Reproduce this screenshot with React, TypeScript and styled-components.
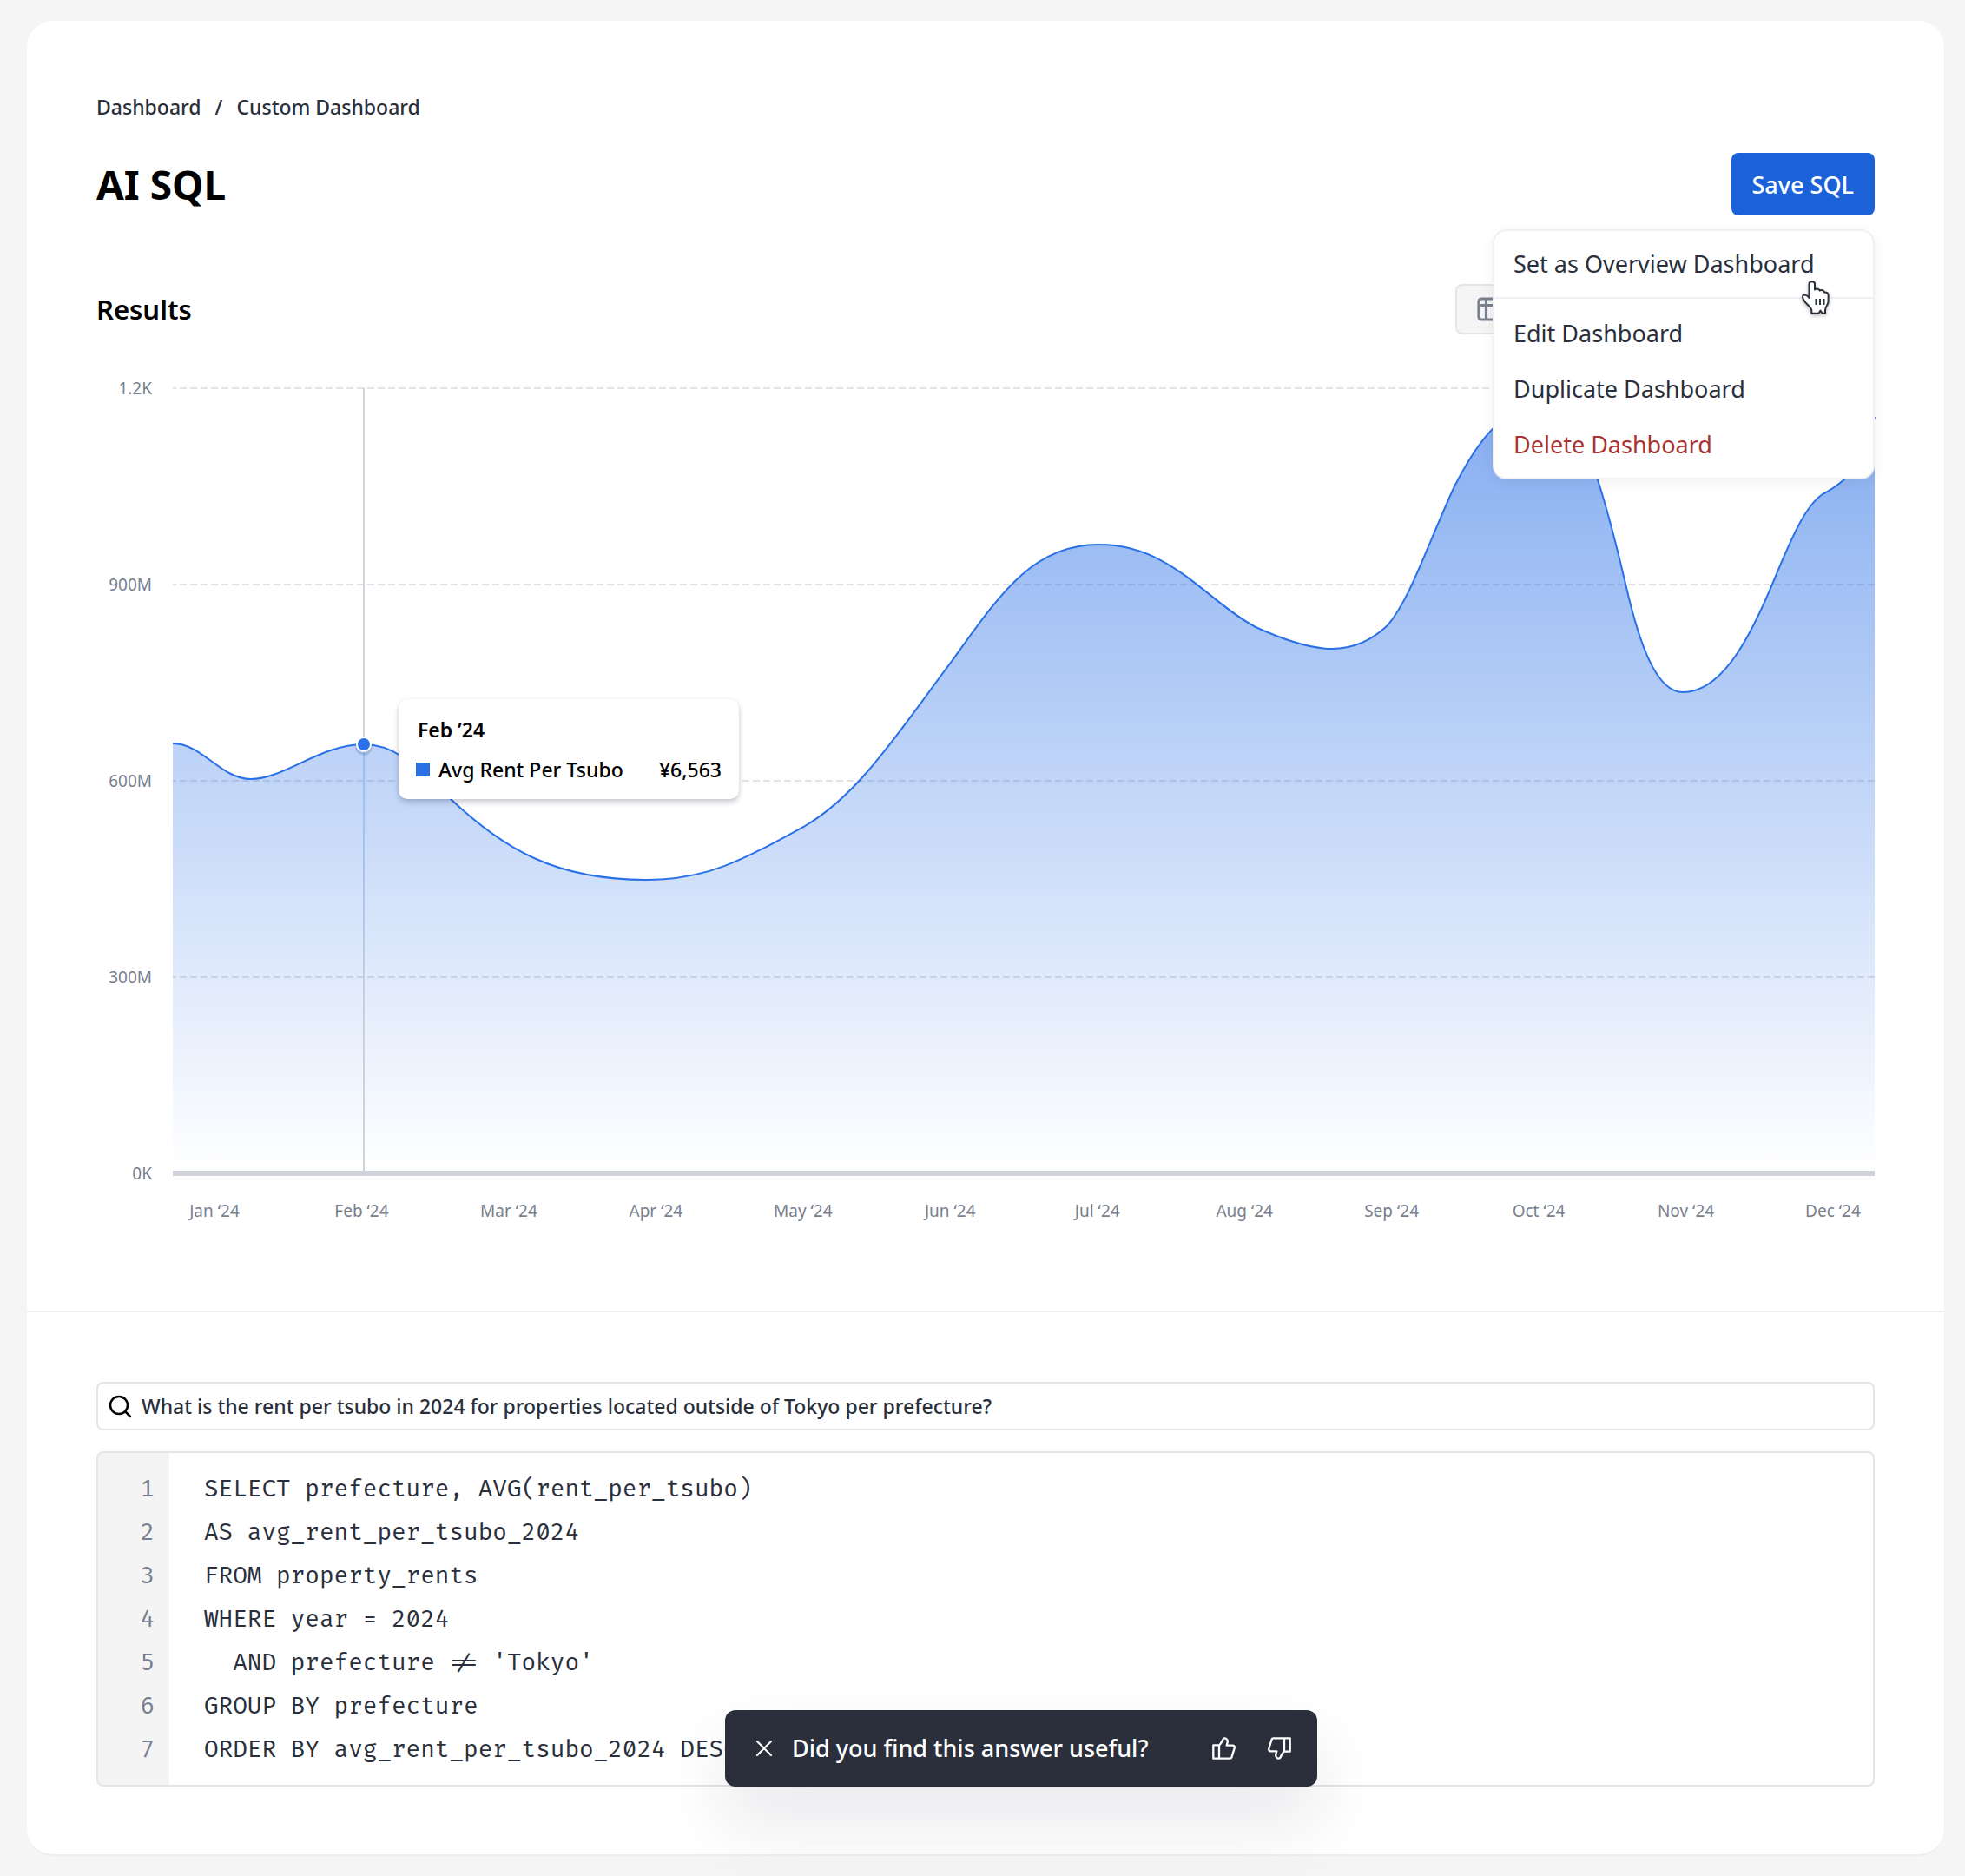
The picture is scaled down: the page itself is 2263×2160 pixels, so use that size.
import React from "react";
import styled, { createGlobalStyle } from "styled-components";

const GlobalStyle = createGlobalStyle`
  *, *::before, *::after { box-sizing: border-box; }
  body {
    margin: 0;
    background: #f5f5f5;
    color: #2a2f3c;
    font-family: "Noto Sans", "Open Sans", sans-serif;
  }
  button, input { font: inherit; color: inherit; }
`;

const Page = styled.div`
  min-height: 100vh;
  padding: 24px 24px 24px 31px;
  overflow: hidden;
`;

const Card = styled.main`
  background: #ffffff;
  border-radius: 30px;
  border-bottom: 2px solid #eeeef0;
`;

const ResultsPane = styled.section`
  padding: 79px 80px 99px;
  border-bottom: 2px solid #f0f0f3;
`;

const QueryPane = styled.section`
  display: flex;
  flex-direction: column;
  gap: 24px;
  padding: 80px 80px 78px;
`;

const Breadcrumb = styled.nav`
  display: flex;
  gap: 16px;
  height: 40px;
  line-height: 40px;
  font-size: 23px;
  font-weight: 500;

  a { color: inherit; text-decoration: none; }
`;

const TitleRow = styled.div`
  display: flex;
  align-items: center;
  justify-content: space-between;
  margin-top: 33px;
`;

const Title = styled.h1`
  margin: 0;
  color: #000;
  font-size: 46px;
  line-height: 72px;
  font-weight: 700;
`;

const MenuAnchor = styled.div`
  position: relative;
`;

const SaveButton = styled.button`
  display: block;
  height: 72px;
  padding: 0 24px;
  border: 0;
  border-radius: 8px;
  background: #1b62d8;
  color: #fff;
  font-size: 27px;
  font-weight: 500;
`;

const Menu = styled.div`
  position: absolute;
  z-index: 3;
  top: 88px;
  right: 0;
  width: 440px;
  padding: 6px 0;
  border: 2px solid #f0f0f2;
  border-radius: 16px;
  background: #fff;
  box-shadow: 0 4px 16px rgba(20, 20, 40, 0.06);
`;

const MenuItem = styled.button<{ $danger?: boolean }>`
  display: block;
  width: 100%;
  height: 64px;
  padding: 0 22px 2px;
  border: 0;
  background: none;
  color: ${(p) => (p.$danger ? "#a93232" : "#2a2f3c")};
  font-size: 27px;
  text-align: left;
`;

const MenuRule = styled.hr`
  height: 2px;
  margin: 6px 0 8px;
  border: 0;
  background: #f0f0f3;
`;

const Pointer = styled.svg`
  position: absolute;
  top: 56px;
  right: 47px;
  width: 36px;
  height: 42px;
  filter: drop-shadow(0 2px 2px rgba(0, 0, 0, 0.25));
  pointer-events: none;
`;

const ResultsHeader = styled.div`
  display: flex;
  align-items: center;
  justify-content: space-between;
  margin-top: 79px;
`;

const SectionTitle = styled.h2`
  margin: 0;
  color: #000;
  font-size: 31px;
  line-height: 58px;
  font-weight: 600;
`;

const ViewSwitch = styled.div`
  display: flex;
  width: 483px;
  height: 58px;
  border: 2px solid #e4e4e9;
  border-radius: 8px;
  background: #f5f5f6;
`;

const ViewButton = styled.button`
  display: flex;
  align-items: center;
  padding: 0 23px;
  border: 0;
  background: none;
  color: #787f8e;
`;

const Chart = styled.div`
  display: grid;
  grid-template-columns: 64px minmax(0, 1fr);
  column-gap: 24px;
  margin-top: 62px;
`;

const ValueAxis = styled.div`
  display: flex;
  flex-direction: column;
  justify-content: space-between;
  height: 936px;
  margin: -16px 0;
  color: #787f8e;
  font-size: 19px;
  line-height: 32px;
  text-align: right;
`;

const Plot = styled.div`
  position: relative;
  height: 904px;
`;

const PlotDrawing = styled.svg`
  display: block;
  width: 100%;
  height: 100%;
  overflow: visible;
`;

const MonthAxis = styled.div`
  grid-column: 2;
  display: flex;
  justify-content: space-between;
  margin-top: 27px;
  color: #787f8e;
  font-size: 19px;
  line-height: 32px;
`;

const Month = styled.span`
  width: 96px;
  text-align: center;
  white-space: nowrap;
`;

const Tooltip = styled.div`
  position: absolute;
  top: 358px;
  left: 260px;
  width: 392px;
  padding: 17px 20px 16px;
  border-radius: 10px;
  background: #fff;
  color: #000;
  font-size: 23px;
  line-height: 36px;
  font-weight: 500;
  box-shadow: 0 4px 6px rgba(20, 20, 50, 0.2), 0 0 4px rgba(20, 20, 50, 0.06);
`;

const TooltipTitle = styled.div`
  padding-left: 2px;
  font-weight: 600;
`;

const TooltipRow = styled.div`
  display: flex;
  align-items: center;
  gap: 10px;
  margin-top: 10px;
`;

const Swatch = styled.span`
  width: 16px;
  height: 16px;
  background: #2a70e6;
`;

const TooltipValue = styled.span`
  margin-left: auto;
`;

const SearchBox = styled.label`
  display: flex;
  align-items: center;
  gap: 11px;
  height: 56px;
  padding: 0 11px;
  border: 2px solid #e4e4e9;
  border-radius: 8px;
  color: #000;
`;

const SearchInput = styled.input`
  flex: 1;
  min-width: 0;
  padding: 0;
  border: 0;
  outline: 0;
  background: none;
  color: #2a2f3c;
  font-size: 23px;
  font-weight: 500;
`;

const CodeBox = styled.div`
  display: grid;
  grid-template-columns: 82px minmax(0, 1fr);
  border: 2px solid #e4e4e9;
  border-radius: 8px;
  font-family: "Fira Code", "Liberation Mono", monospace;
  font-size: 27px;
  line-height: 50px;
`;

const Gutter = styled.div`
  padding: 17px 17px 15px 0;
  border-radius: 6px 0 0 6px;
  background: #f4f4f4;
  color: #787f8e;
  text-align: right;
`;

const CodePane = styled.div`
  position: relative;
  padding: 17px 40px 15px;
`;

const CodeLine = styled.div`
  white-space: pre;
`;

const Toast = styled.div`
  position: absolute;
  bottom: -2px;
  left: 50%;
  display: flex;
  align-items: center;
  width: 682px;
  height: 88px;
  padding: 0 30px 0 35px;
  border-radius: 12px;
  background: #2a2f3b;
  color: #fff;
  font-family: "Noto Sans", "Open Sans", sans-serif;
  font-size: 27px;
  font-weight: 500;
  transform: translateX(-50%);
  box-shadow: 0 40px 80px rgba(30, 30, 60, 0.1);
`;

const ToastText = styled.span`
  flex: 1;
  margin-left: 22px;
  white-space: nowrap;
`;

const IconButton = styled.button`
  display: flex;
  padding: 0;
  border: 0;
  background: none;
`;

const Votes = styled.div`
  display: flex;
  gap: 37px;
`;

const LINE = [
  "M0 409",
  "C34 409 55 450 90 450",
  "C128 450 170 410 220 410",
  "C262 410 290 446 319 472",
  "C380 530 440 566 545 566",
  "C615 566 655 544 728 504",
  "C790 468 835 397 898 313",
  "C952 238 990 180 1066 180",
  "C1150 180 1190 245 1247 275",
  "C1280 290 1310 300 1335 300",
  "C1360 300 1380 291 1399 273",
  "C1425 243 1445 180 1476 113",
  "C1498 70 1530 18 1580 18",
  "C1620 18 1646 110 1673 225",
  "C1690 300 1710 350 1739 350",
  "C1783 350 1815 291 1844 221",
  "C1867 165 1882 134 1900 122",
  "C1910 117 1918 111 1925 105",
  "C1942 91 1952 66 1960 33",
].join("");

const MONTHS = ["Jan", "Feb", "Mar", "Apr", "May", "Jun", "Jul", "Aug", "Sep", "Oct", "Nov", "Dec"];
const VALUES = ["1.2K", "900M", "600M", "300M", "0K"];
const CODE = [
  "SELECT prefecture, AVG(rent_per_tsubo)",
  "AS avg_rent_per_tsubo_2024",
  "FROM property_rents",
  "WHERE year = 2024",
  "  AND prefecture != 'Tokyo'",
  "GROUP BY prefecture",
  "ORDER BY avg_rent_per_tsubo_2024 DESC",
];

function ThumbIcon({ down }: { down?: boolean }) {
  return (
    <svg width="27" height="26" viewBox="0 0 27 26" fill="none" stroke="currentColor" strokeWidth="2.300" strokeLinejoin="round">
      <g transform={down ? "rotate(180 13.5 13)" : undefined}>
        <path d="M1.300 9.300H8V24.700H1.300ZM8 9.600C10 8 11.300 4.800 12.500 2.600C13.300 1.100 14.800 0.900 16.200 1.900C17.900 3.100 18.100 4.500 17.600 6.300L16.700 9.600H23.500C25.200 9.600 26.100 11 25.700 12.600L22.500 23.200C22.200 24.200 21.600 24.700 20.500 24.700H8" />
      </g>
    </svg>
  );
}

export default function App() {
  return (
    <>
      <GlobalStyle />
      <Page>
        <Card>
          <ResultsPane>
            <Breadcrumb aria-label="Breadcrumb">
              <a href="#dashboard">Dashboard</a>
              <span>/</span>
              <a href="#custom">Custom Dashboard</a>
            </Breadcrumb>
            <TitleRow>
              <Title>AI SQL</Title>
              <MenuAnchor>
                <SaveButton type="button">Save SQL</SaveButton>
                <Menu>
                  <MenuItem type="button">Set as Overview Dashboard</MenuItem>
                  <MenuRule />
                  <MenuItem type="button">Edit Dashboard</MenuItem>
                  <MenuItem type="button">Duplicate Dashboard</MenuItem>
                  <MenuItem type="button" $danger>Delete Dashboard</MenuItem>
                  <Pointer viewBox="14 12 36 42" fill="#fff" stroke="#2a2f3c" strokeWidth="2" strokeLinejoin="round">
                    <path d="M23.500 33V17C23.500 13.300 30 13.300 30 17V23.500C32 22 35 22.500 35.500 24.500C38 23.500 40.300 24.300 41 26.500C43.500 26 45.600 27.500 45.600 30V37C45.600 41 42 43 42 47V50.800H38.500L36.500 47.500L34.500 50.800H26.300V47C25 42 16 38 16 31.500C16 29 20.500 28.500 23.500 33Z" />
                    <path d="M31.500 34V41M36 34V41M40.500 34V41" />
                  </Pointer>
                </Menu>
              </MenuAnchor>
            </TitleRow>
            <ResultsHeader>
              <SectionTitle>Results</SectionTitle>
              <ViewSwitch>
                <ViewButton type="button" aria-label="Table view">
                  <svg width="28" height="28" viewBox="0 0 28 28" fill="none" stroke="currentColor" strokeWidth="3.200">
                    <rect x="2" y="2" width="24" height="24" rx="3" />
                    <path d="M2 9.500H26M10.500 2V26" />
                  </svg>
                </ViewButton>
              </ViewSwitch>
            </ResultsHeader>
            <Chart>
              <ValueAxis>
                {VALUES.map((v) => <span key={v}>{v}</span>)}
              </ValueAxis>
              <Plot>
                <PlotDrawing viewBox="0 0 1960 904" preserveAspectRatio="none">
                  <defs>
                    <linearGradient id="area" gradientUnits="userSpaceOnUse" x1="0" y1="20" x2="0" y2="904">
                      <stop offset="0" stopColor="#2a70e6" stopOpacity="0.57" />
                      <stop offset="1" stopColor="#2a70e6" stopOpacity="0" />
                    </linearGradient>
                    <linearGradient id="marker" gradientUnits="userSpaceOnUse" x1="0" y1="411" x2="0" y2="904">
                      <stop offset="0" stopColor="#98bbf2" />
                      <stop offset="0.350" stopColor="#adc5ee" />
                      <stop offset="0.600" stopColor="#c9cfdd" />
                      <stop offset="1" stopColor="#d3d4db" />
                    </linearGradient>
                  </defs>
                  <path d="M0 0H1960M0 226H1960M0 452H1960M0 678H1960" stroke="#e2e2e8" strokeWidth="2" strokeDasharray="8 4" strokeDashoffset="4" />
                  <path d={`${LINE}V904H0Z`} fill="url(#area)" />
                  <path d="M220 0V411" stroke="#d3d4db" strokeWidth="2" />
                  <path d="M219 411H221V904H219Z" fill="url(#marker)" />
                  <path d={LINE} fill="none" stroke="#2a70e6" strokeWidth="2" />
                  <path d="M0 904H1960" stroke="#d1d3dc" strokeWidth="6" />
                  <circle cx="220" cy="413" r="10" fill="#14284f" fillOpacity="0.15" />
                  <circle cx="220" cy="410" r="8" fill="#2a70e6" stroke="#fff" strokeWidth="2" />
                </PlotDrawing>
                <Tooltip>
                  <TooltipTitle>Feb ’24</TooltipTitle>
                  <TooltipRow>
                    <Swatch />
                    <span>Avg Rent Per Tsubo</span>
                    <TooltipValue>¥6,563</TooltipValue>
                  </TooltipRow>
                </Tooltip>
              </Plot>
              <MonthAxis>
                {MONTHS.map((m) => <Month key={m}>{m} ‘24</Month>)}
              </MonthAxis>
            </Chart>
          </ResultsPane>
          <QueryPane>
            <SearchBox>
              <svg width="28" height="28" viewBox="0 0 28 28" fill="none" stroke="currentColor" strokeWidth="2.500" strokeLinecap="round">
                <circle cx="13" cy="13" r="10" />
                <path d="M20.500 20.500L26 26" />
              </svg>
              <SearchInput aria-label="Question" defaultValue="What is the rent per tsubo in 2024 for properties located outside of Tokyo per prefecture?" />
            </SearchBox>
            <CodeBox>
              <Gutter>
                {CODE.map((_, i) => <div key={i}>{i + 1}</div>)}
              </Gutter>
              <CodePane>
                {CODE.map((line) => <CodeLine key={line}>{line}</CodeLine>)}
                <Toast role="status">
                  <IconButton type="button" aria-label="Dismiss">
                    <svg width="20" height="20" viewBox="0 0 20 20" stroke="currentColor" strokeWidth="2.200" strokeLinecap="round">
                      <path d="M2 2L18 18M18 2L2 18" />
                    </svg>
                  </IconButton>
                  <ToastText>Did you find this answer useful?</ToastText>
                  <Votes>
                    <IconButton type="button" aria-label="Useful"><ThumbIcon /></IconButton>
                    <IconButton type="button" aria-label="Not useful"><ThumbIcon down /></IconButton>
                  </Votes>
                </Toast>
              </CodePane>
            </CodeBox>
          </QueryPane>
        </Card>
      </Page>
    </>
  );
}
